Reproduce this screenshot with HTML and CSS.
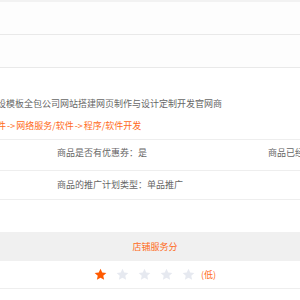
FILE: index.html
```html
<!DOCTYPE html>
<html lang="zh-CN">
<head>
    <meta charset="UTF-8">
    <meta name="viewport" content="width=device-width, initial-scale=1.0">
    <title>商品详情</title>
    <link rel="stylesheet" href="styles.css">
</head>
<body>
    <div class="top-strip"></div>

    <div class="row"></div>
    <div class="row"></div>

    <section class="goods-title">
        <p class="goods-name">建设模板全包公司网站搭建网页制作与设计定制开发官网商</p>
        <p class="crumbs">软件<span class="arrow">-></span>网络服务/软件<span class="arrow">-></span>程序/软件开发</p>
    </section>

    <div class="attr-row first">
        <span class="attr">商品是否有优惠券：是</span>
        <span class="attr">商品已经过安全认证</span>
    </div>
    <div class="attr-row second">
        <span class="attr">商品的推广计划类型：单品推广</span>
    </div>

    <div class="gap"></div>

    <section class="shop-score">
        <h3>店铺服务分</h3>
        <div class="stars">
            <svg class="star on" viewBox="0 0 24 24"><path d="M12 1.5l3.2 7 7.6.8-5.7 5.1 1.6 7.5L12 18.1l-6.7 3.8 1.6-7.5L1.2 9.3l7.6-.8z"/></svg>
            <svg class="star" viewBox="0 0 24 24"><path d="M12 1.5l3.2 7 7.6.8-5.7 5.1 1.6 7.5L12 18.1l-6.7 3.8 1.6-7.5L1.2 9.3l7.6-.8z"/></svg>
            <svg class="star" viewBox="0 0 24 24"><path d="M12 1.5l3.2 7 7.6.8-5.7 5.1 1.6 7.5L12 18.1l-6.7 3.8 1.6-7.5L1.2 9.3l7.6-.8z"/></svg>
            <svg class="star" viewBox="0 0 24 24"><path d="M12 1.5l3.2 7 7.6.8-5.7 5.1 1.6 7.5L12 18.1l-6.7 3.8 1.6-7.5L1.2 9.3l7.6-.8z"/></svg>
            <svg class="star" viewBox="0 0 24 24"><path d="M12 1.5l3.2 7 7.6.8-5.7 5.1 1.6 7.5L12 18.1l-6.7 3.8 1.6-7.5L1.2 9.3l7.6-.8z"/></svg>
            <span class="level">(低)</span>
        </div>
    </section>
</body>
</html>
```

FILE: styles.css
```css
body {
    font-family: "Noto Sans CJK SC", "Noto Sans", sans-serif;
    font-size: 9px;
    margin: 0;
    padding: 0;
    background-color: #fff;
    color: #666;
    overflow: hidden;
}
.top-strip {
    height: 2px;
    background-color: #f2f2f2;
}
.row {
    height: 32px;
    background-color: #fdfdfd;
    border-bottom: 1px solid #e9e9e9;
}
.goods-title {
    height: 43px;
    padding-top: 28px;
    border-bottom: 1px solid #eee;
    margin-left: -12px;
    white-space: nowrap;
}
.goods-title p {
    margin: 0;
    line-height: 16px;
}
.goods-name {
    color: #666;
}
.crumbs {
    margin-top: 6px !important;
    margin-left: 0 !important;
    color: #ff6a1a;
}
.crumbs .arrow {
    margin: 0 1px;
}
.attr-row {
    display: grid;
    grid-template-columns: 211px 211px;
    padding-left: 57px;
    border-bottom: 1px solid #eee;
    white-space: nowrap;
}
.attr-row.first {
    box-sizing: border-box;
    height: 31px;
    line-height: 16px;
    padding-top: 5px;
}
.attr-row.second {
    height: 28px;
    line-height: 28px;
}
.gap {
    height: 32px;
}
.shop-score {
    padding-left: 10px;
    text-align: center;
}
.shop-score h3 {
    margin: 0 0 0 -10px;
    padding-left: 10px;
    height: 29px;
    line-height: 29px;
    font-size: 9px;
    font-weight: normal;
    color: #ff6a1a;
    background-color: #f0f0f0;
}
.stars {
    height: 27px;
    display: flex;
    align-items: center;
    justify-content: center;
    gap: 9px;
    border-bottom: 1px solid #eee;
    margin-left: -10px;
    padding-left: 10px;
}
.star {
    width: 13px;
    height: 13px;
    fill: #e6e9f0;
}
.star.on {
    fill: #ff5a00;
}
.level {
    margin-left: -3px;
    color: #ff6a1a;
}
```
